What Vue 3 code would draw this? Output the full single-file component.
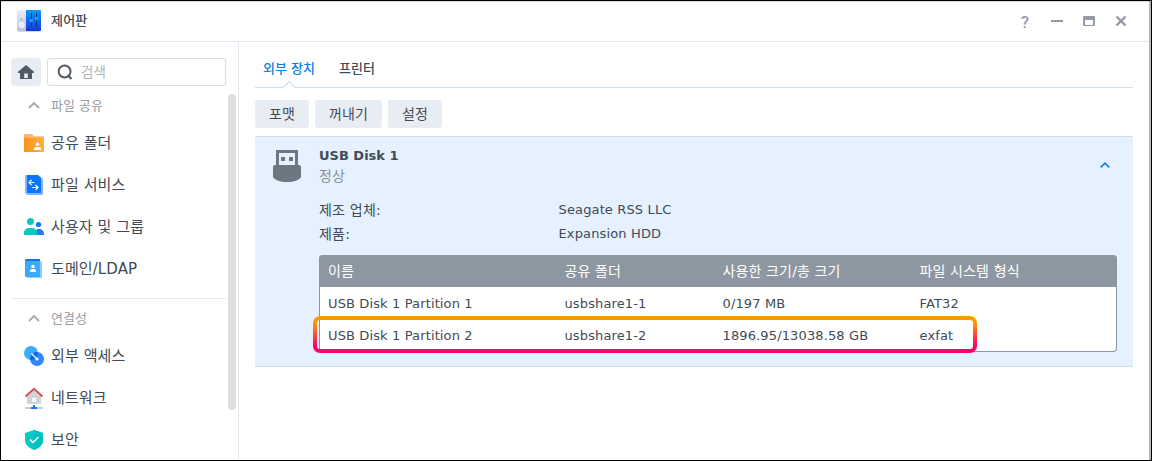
<template>
  <div class="window">
    <header class="titlebar">
      <svg class="titlebar__logo" width="24" height="24" viewBox="0 0 24 24">
        <defs>
          <linearGradient id="logoLeft" x1="0" y1="0" x2="0" y2="1">
            <stop offset="0" stop-color="#e9edff" />
            <stop offset="1" stop-color="#b9bdda" />
          </linearGradient>
          <linearGradient id="logoRight" x1="0" y1="0" x2="0" y2="1">
            <stop offset="0" stop-color="#0c9bf2" />
            <stop offset="1" stop-color="#1437dc" />
          </linearGradient>
        </defs>
        <rect x="1" y="19" width="22" height="3" rx="1.5" fill="#d5d5dc" />
        <rect width="12" height="21" rx="1" fill="url(#logoLeft)" />
        <path d="M9 0h14a1 1 0 0 1 1 1v19a1 1 0 0 1-1 1H9z" fill="url(#logoRight)" />
        <circle cx="4.5" cy="9.5" r=".6" fill="#656a86" />
        <circle cx="4.5" cy="15" r="2.8" fill="#e8ebfa" stroke="#fff" stroke-width=".5" />
        <path d="M14.5 3v14M19.5 3v14" stroke="#123579" stroke-width="1" />
        <circle cx="14.5" cy="10.5" r="1.7" fill="#249cf5" />
        <circle cx="19.5" cy="8.5" r="1.7" fill="#249cf5" />
      </svg>
      <span class="titlebar__title">제어판</span>
      <div class="titlebar__controls">
        <span class="titlebar__help">?</span>
        <svg width="12" height="12" viewBox="0 0 12 12"><path d="M0 5h12" stroke="#959ba3" stroke-width="2" /></svg>
        <svg width="12" height="12" viewBox="0 0 12 12">
          <path fill-rule="evenodd" d="M1 0h10a1 1 0 0 1 1 1v8a1 1 0 0 1-1 1H1a1 1 0 0 1-1-1V1a1 1 0 0 1 1-1zM2 4v5h8V4z" fill="#959ba3" />
        </svg>
        <svg width="12" height="12" viewBox="0 0 12 12"><path d="M1.500.5l9 9M10.500.5l-9 9" stroke="#959ba3" stroke-width="2.4" /></svg>
      </div>
    </header>

    <div class="layout">
      <aside class="sidebar">
        <div class="sidebar__top">
          <button class="home">
            <svg width="16" height="14" viewBox="0 0 16 14">
              <path fill-rule="evenodd" d="M8 0l8 6.8V8h-2v6H2V8H0V6.8zM6.2 8.5V13h3.6V8.5z" fill="#505a64" />
            </svg>
          </button>
          <div class="search">
            <svg width="16" height="16" viewBox="0 0 16 16" fill="none" stroke="#505a64">
              <circle cx="7.6" cy="7.5" r="5.9" stroke-width="2" />
              <path d="M10.8 11l3.600 4" stroke-width="2.2" />
            </svg>
            <span>검색</span>
          </div>
        </div>

        <nav v-for="group in groups" :key="group.title" class="group">
          <div class="group__title">
            <svg width="12" height="8" viewBox="0 0 12 8"><path d="M1 7l5-5 5 5" fill="none" stroke="#a5a8ac" stroke-width="1.8" /></svg>
            <span>{{ group.title }}</span>
          </div>
          <a v-for="item in group.items" :key="item.label" class="item">
            <svg class="item__icon" width="20" height="20" viewBox="0 0 20 20">
              <template v-if="item.icon === 'folder'">
                <path d="M0 2a1 1 0 0 1 1-1h7l2 2.2h9a1 1 0 0 1 1 1V7H0z" fill="#fbb875" />
                <path d="M0 4.8h20V18a1 1 0 0 1-1 1H1a1 1 0 0 1-1-1z" fill="url(#orange)" />
                <circle cx="13.5" cy="11.3" r="1.8" fill="#fff" />
                <path d="M10 17v-1.3c0-1.3 1.6-1.7 3.5-1.7s3.5.4 3.5 1.7V17z" fill="#fff" />
              </template>
              <template v-else-if="item.icon === 'files'">
                <path d="M1 1a1 1 0 0 1 1-1h12l5 4v15a1 1 0 0 1-1 1H3l-2-2z" fill="#81b6ff" />
                <path d="M3 0h11l3 3v15H4a1 1 0 0 1-1-1z" fill="#0875ff" />
                <path d="M7.5 5L5 7.5 7.5 10M5 7.5h5.500M11.500 10l2.500 2.500-2.500 2.500M14 12.500H8" fill="none" stroke="#fff" stroke-width="1.2" />
              </template>
              <template v-else-if="item.icon === 'users'">
                <circle cx="14.5" cy="7.500" r="2.600" fill="#1777e6" />
                <path d="M11 18v-1.500c0-2.500 1.500-4.500 3.500-4.500h1c2.500 0 4.500 2 4.500 5v1z" fill="#1b7ff5" />
                <circle cx="6.5" cy="4.500" r="3.500" fill="#0bc8be" />
                <path d="M0 18v-2c0-3 2-5 5-5h3c3 0 5 2 5 5v2z" fill="#08c9c1" />
              </template>
              <template v-else-if="item.icon === 'ldap'">
                <path d="M3 2h14a1 1 0 0 1 1 1v15a1 1 0 0 1-1 1H3z" fill="#8bcfff" />
                <path d="M1 1.5A1.5 1.5 0 0 1 2.5 0H16v3H1z" fill="#0875ff" />
                <path d="M1 2h15v16H2a1 1 0 0 1-1-1z" fill="#3ba9fc" />
                <circle cx="9" cy="7.5" r="1.7" fill="#fff" />
                <path d="M6 13v-1.2c0-1.3 1.3-1.8 3-1.8s3 .5 3 1.8V13z" fill="#fff" />
              </template>
              <template v-else-if="item.icon === 'access'">
                <circle cx="7" cy="7" r="7" fill="#3eaafb" />
                <circle cx="13" cy="13" r="7" fill="#3187ff" />
                <path d="M6.2 13.9A7 7 0 0 1 13.9 6.1 7 7 0 0 1 6.2 13.9z" fill="#0868ed" />
                <path d="M7.5 7.5L12.5 12.5" stroke="#fff" stroke-width="1.3" />
                <circle cx="13" cy="13" r="1.5" fill="#fff" />
              </template>
              <template v-else-if="item.icon === 'network'">
                <path d="M3 7l7-6 7 6v8a1 1 0 0 1-1 1H4a1 1 0 0 1-1-1z" fill="#d0d3d8" />
                <path d="M1.500 8.500L10 .8l8.500 7.700" fill="none" stroke="#d9544f" stroke-width="2" />
                <rect x="8" y="10" width="4" height="4" fill="#fff" />
                <path d="M1 20h18" stroke="#c9ccd1" stroke-width="2" />
                <path d="M9 17h2v2h2v2H7v-2h2z" fill="#1478ff" />
              </template>
              <template v-else>
                <path d="M10 0l9 3v7c0 5-4 8-9 10-5-2-9-5-9-10V3z" fill="#08cbc6" />
                <path d="M10 0l9 3v7c0 5-4 8-9 10z" fill="#02bfc1" />
                <path d="M6 9.5l3 3 5.500-5.500" fill="none" stroke="#fff" stroke-width="1.5" />
              </template>
            </svg>
            <span class="item__label">{{ item.label }}</span>
          </a>
        </nav>
        <div class="sidebar__scroll"></div>
        <svg width="0" height="0" class="defs">
          <linearGradient id="orange">
            <stop offset="0" stop-color="#f7931e" />
            <stop offset="1" stop-color="#ffb136" />
          </linearGradient>
        </svg>
      </aside>

      <main class="content">
        <div class="tabs">
          <a class="tabs__item tabs__item--active">외부 장치
            <svg class="tabs__notch" width="14" height="8" viewBox="0 0 14 8">
              <path d="M1 7.500l6-6 6 6V8H1z" fill="#fff" />
              <path d="M1 7.500l6-6 6 6" fill="none" stroke="#d3e0ea" stroke-width="1.2" />
            </svg>
          </a>
          <a class="tabs__item">프린터</a>
        </div>

        <div class="toolbar">
          <button v-for="b in buttons" :key="b" class="toolbar__btn">{{ b }}</button>
        </div>

        <section class="device">
          <div class="device__head">
            <svg width="28" height="32" viewBox="0 0 28 32">
              <path fill-rule="evenodd" d="M3 0h22v15H3zM6 3v12h16V3z" fill="#6d7780" />
              <path d="M8 7h4v4H8zM16 7h4v4h-4z" fill="#6d7780" />
              <path d="M2 15h24a2 2 0 0 1 2 2v10c-2 3.500-7 5-14 5S2 30.500 0 27V17a2 2 0 0 1 2-2z" fill="#6d7780" />
            </svg>
            <div class="device__names">
              <div class="device__name">USB Disk 1</div>
              <div class="device__status">정상</div>
            </div>
            <svg class="device__toggle" width="10" height="6" viewBox="0 0 10 6">
              <path d="M.7 5.300L5 1.200l4.300 4.100" fill="none" stroke="#087fea" stroke-width="1.600" />
            </svg>
          </div>

          <dl class="info">
            <div v-for="row in info" :key="row.label" class="info__row">
              <dt>{{ row.label }}</dt>
              <dd>{{ row.value }}</dd>
            </div>
          </dl>

          <div class="partitions">
            <div class="partitions__row partitions__row--head">
              <span v-for="c in columns" :key="c">{{ c }}</span>
            </div>
            <div v-for="row in partitions" :key="row[0]" class="partitions__row">
              <span v-for="cell in row" :key="cell">{{ cell }}</span>
            </div>
            <svg class="partitions__mark" width="664" height="37">
              <defs>
                <linearGradient id="mark" x1="0" y1="0" x2="0" y2="1">
                  <stop offset=".15" stop-color="#ff9900" />
                  <stop offset=".85" stop-color="#ff006a" />
                </linearGradient>
              </defs>
              <rect x="2" y="2" width="660" height="33" rx="5" fill="none" stroke="url(#mark)" stroke-width="4" />
            </svg>
          </div>
        </section>
      </main>
    </div>
  </div>
</template>

<script setup>
const groups = [
  {
    title: '파일 공유',
    items: [
      { label: '공유 폴더', icon: 'folder' },
      { label: '파일 서비스', icon: 'files' },
      { label: '사용자 및 그룹', icon: 'users' },
      { label: '도메인/LDAP', icon: 'ldap' },
    ],
  },
  {
    title: '연결성',
    items: [
      { label: '외부 액세스', icon: 'access' },
      { label: '네트워크', icon: 'network' },
      { label: '보안', icon: 'security' },
    ],
  },
]

const buttons = ['포맷', '꺼내기', '설정']

const info = [
  { label: '제조 업체:', value: 'Seagate RSS LLC' },
  { label: '제품:', value: 'Expansion HDD' },
]

const columns = ['이름', '공유 폴더', '사용한 크기/총 크기', '파일 시스템 형식']
const partitions = [
  ['USB Disk 1 Partition 1', 'usbshare1-1', '0/197 MB', 'FAT32'],
  ['USB Disk 1 Partition 2', 'usbshare1-2', '1896.95/13038.58 GB', 'exfat'],
]
</script>

<style>
body {
  background: #fff;
}
</style>

<style scoped>
.window {
  box-sizing: border-box;
  width: 1152px;
  height: 461px;
  border: 1px solid #000;
  box-shadow: inset -2px 0 0 #b4b6b7, inset 0 1px 0 #d9d9d9;
  overflow: hidden;
  font-family: 'DejaVu Sans', 'Noto Sans CJK KR', sans-serif;
  font-size: 13px;
  color: #414b55;
  white-space: nowrap;
}

.titlebar {
  display: flex;
  align-items: center;
  box-sizing: border-box;
  height: 41px;
  margin-right: 2px;
  padding: 1px 22px 0 16px;
  border-bottom: 1px solid #e1e7ee;
}

.titlebar__logo {
  margin-top: 1px;
}

.titlebar__title {
  margin-left: 10px;
  padding-bottom: 4px;
  font-size: 13px;
  font-weight: 500;
  letter-spacing: 0.2px;
}

.titlebar__controls {
  display: flex;
  align-items: center;
  gap: 20px;
  margin-left: auto;
}

.titlebar__help {
  width: 12px;
  font-family: Roboto, sans-serif;
  font-size: 17px;
  font-weight: 500;
  text-align: center;
  color: #959ba3;
}

.layout {
  display: flex;
  height: 418px;
}

.sidebar {
  position: relative;
  box-sizing: border-box;
  width: 238px;
  padding: 16px 12px 0 10px;
  border-right: 1px solid #e1e7ee;
}

.sidebar__top {
  display: flex;
  gap: 6px;
}

.home {
  display: flex;
  align-items: center;
  justify-content: center;
  width: 30px;
  height: 28px;
  padding: 0;
  border: 0;
  border-radius: 3px;
  background: #e8edf4;
}

.search {
  display: flex;
  flex: 1;
  align-items: center;
  gap: 8px;
  box-sizing: border-box;
  height: 28px;
  padding-left: 9px;
  border: 1px solid #d3e0eb;
  border-radius: 3px;
  color: #b0b5ba;
  font-size: 13.5px;
}

.search span {
  padding-bottom: 2px;
}

.group + .group {
  margin-top: 8px;
  border-top: 1px solid #e6ebf1;
}

.group__title {
  display: flex;
  align-items: center;
  gap: 11px;
  height: 36px;
  padding: 1px 0 0 17px;
  box-sizing: border-box;
  color: #999da3;
}

.group__title span {
  padding-bottom: 1px;
}

.item {
  display: flex;
  align-items: center;
  gap: 7px;
  height: 42px;
  padding-left: 13px;
  font-size: 15px;
}

.item__icon {
  flex-shrink: 0;
  overflow: visible;
}

.item__label {
  padding-bottom: 4px;
  letter-spacing: 0.1px;
}

.sidebar__scroll {
  position: absolute;
  top: 52px;
  right: 2px;
  width: 8px;
  height: 316px;
  border-radius: 4px;
  background: #dfdfdf;
}

.defs {
  position: absolute;
}

.content {
  flex: 1;
  padding: 8px 18px 0 16px;
}

.tabs {
  display: flex;
  gap: 24px;
  box-sizing: border-box;
  height: 38px;
  padding-left: 8px;
  border-bottom: 1px solid #d3e0ea;
  line-height: 37px;
  font-weight: 500;
}

.tabs__item {
  position: relative;
}

.tabs__item--active {
  color: #087fea;
}

.tabs__notch {
  position: absolute;
  left: 19px;
  bottom: -1px;
}

.toolbar {
  display: flex;
  gap: 6px;
  margin: 12px 0 8px;
}

.toolbar__btn {
  height: 28px;
  padding: 0 14px 3px;
  border: 0;
  border-radius: 3px;
  background: #e8edf4;
  font-family: inherit;
  font-size: 14px;
  letter-spacing: 0.12px;
  color: #414b55;
}

.device {
  box-sizing: border-box;
  height: 231px;
  padding: 9px 16px 0 18px;
  border-top: 1px solid #d0dfea;
  border-bottom: 1px solid #d0dfea;
  background: #e5f1fe;
}

.device__head {
  display: flex;
  align-items: flex-start;
}

.device__head > svg:first-child {
  margin-top: 4px;
}

.device__names {
  margin: -1px 0 1px 18px;
  line-height: 21px;
}

.device__name {
  font-weight: bold;
}

.device__status {
  font-size: 14px;
  color: #858f99;
}

.device__toggle {
  margin: 16px 7px 0 auto;
}

.info {
  margin: 10px 0 9px 46px;
}

.info__row {
  display: flex;
  height: 24px;
  line-height: 24px;
}

.info dt {
  width: 239.5px;
  font-size: 14px;
  letter-spacing: 0.2px;
}

.info dd {
  margin: 0;
  letter-spacing: 0.14px;
}

.partitions {
  position: relative;
  box-sizing: border-box;
  width: 798px;
  height: 97px;
  margin-left: 46px;
  border: 1px solid #8d97a1;
  border-top: 0;
  border-radius: 4px;
  background: #fff;
}

.partitions__row {
  display: grid;
  grid-template-columns: 236.5px 158px 197px 1fr;
  height: 32px;
  padding-left: 8px;
  line-height: 34px;
  letter-spacing: 0.13px;
}

.partitions__row--head {
  margin: 0 -1px;
  padding-left: 9px;
  border-radius: 4px 4px 0 0;
  background: #8d97a1;
  color: #fff;
  font-size: 14px;
  line-height: 32px;
}

.partitions__mark {
  position: absolute;
  top: 61px;
  left: -7px;
}
</style>
